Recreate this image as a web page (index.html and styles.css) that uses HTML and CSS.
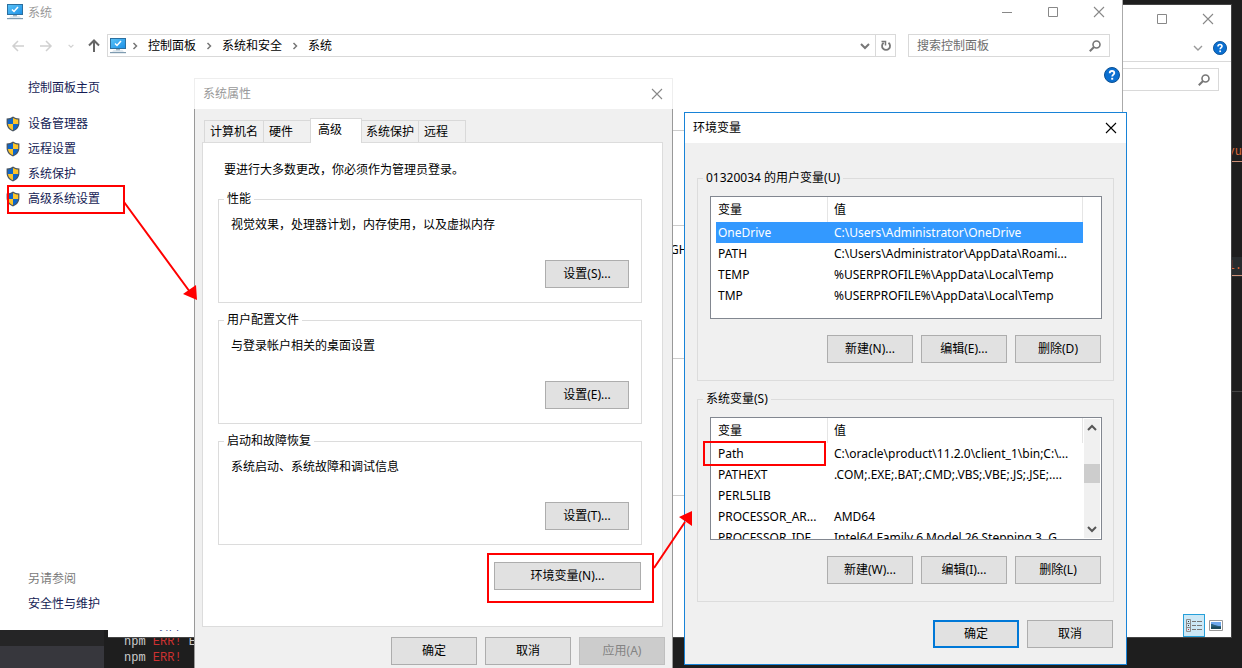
FILE: index.html
```
<!DOCTYPE html>
<html lang="zh-CN">
<head>
    <meta charset="UTF-8">
    <meta name="viewport" content="width=device-width, initial-scale=1.0">
    <title>环境变量</title>
    <link rel="stylesheet" href="styles.css">
</head>
<body>
    <!-- shared icons -->
    <svg class="defs" width="0" height="0" aria-hidden="true">
        <defs>
            <linearGradient id="screen" x1="0" y1="0" x2="1" y2="1">
                <stop offset="0" stop-color="#5cc4f8"/>
                <stop offset="1" stop-color="#1a8fe6"/>
            </linearGradient>
            <symbol id="monitor" viewBox="0 0 16 16">
                <rect x="0.5" y="0.5" width="15" height="10" fill="url(#screen)" stroke="#2b6f9f"/>
                <path d="M5 5.500l2 2 4-4.500" fill="none" stroke="#fff" stroke-width="1.500"/>
                <path d="M6 11h4v1.500H6z" fill="#9db4c4"/>
                <path d="M3.500 12.500h9l1.500 1H2z" fill="#c4d4df"/>
                <path d="M0 14h16v1.200H0z" fill="#7f9bb0"/>
            </symbol>
            <symbol id="shield" viewBox="0 0 14 16">
                <path d="M7 .5C5.300 1.800 3.200 2.400.6 2.400V7c0 4 2.400 6.900 6.400 8.500 4-1.600 6.400-4.500 6.400-8.500V2.400C10.800 2.400 8.700 1.800 7 .5z" fill="#4a5560"/>
                <path d="M7 1.900C5.600 2.800 3.900 3.400 1.800 3.500V8H7z" fill="#0f66c8"/>
                <path d="M7 1.900c1.400.9 3.100 1.500 5.200 1.600V8H7z" fill="#fcc429"/>
                <path d="M1.900 8H7v6.200C4.100 13 2.200 10.900 1.900 8z" fill="#fcc429"/>
                <path d="M12.100 8H7v6.200c2.900-1.200 4.800-3.300 5.100-6.200z" fill="#0f66c8"/>
            </symbol>
            <symbol id="close" viewBox="0 0 12 12">
                <path d="M1 1l10 10M11 1L1 11" fill="none" stroke="currentColor" stroke-width="1.100"/>
            </symbol>
            <symbol id="maximize" viewBox="0 0 12 12">
                <path d="M1.500 1.500h9v9h-9z" fill="none" stroke="currentColor"/>
            </symbol>
            <symbol id="minimize" viewBox="0 0 12 12">
                <path d="M1 6.500h10" fill="none" stroke="currentColor"/>
            </symbol>
            <symbol id="chevron-down" viewBox="0 0 10 10">
                <path d="M1 3l4 4 4-4" fill="none" stroke="currentColor" stroke-width="2"/>
            </symbol>
            <symbol id="chevron-thin" viewBox="0 0 10 10">
                <path d="M1 3l4 4 4-4" fill="none" stroke="currentColor" stroke-width="1.400"/>
            </symbol>
            <symbol id="chevron-up" viewBox="0 0 10 10">
                <path d="M1 7l4-4 4 4" fill="none" stroke="currentColor" stroke-width="2"/>
            </symbol>
            <symbol id="chevron-right" viewBox="0 0 6 8">
                <path d="M1.500 1l3 3-3 3" fill="none" stroke="currentColor" stroke-width="1.500"/>
            </symbol>
            <symbol id="search" viewBox="0 0 12 12">
                <circle cx="7.500" cy="4.500" r="3.500" fill="none" stroke="currentColor" stroke-width="1.600"/>
                <path d="M5 7L.8 11.200" fill="none" stroke="currentColor" stroke-width="2"/>
            </symbol>
            <symbol id="help" viewBox="0 0 16 16">
                <circle cx="8" cy="8" r="7.500" fill="#0a6fd0" stroke="#0a4f92"/>
                <path d="M5.700 6.200C5.700 4.700 6.700 4 8 4s2.300.7 2.300 2c0 1.600-2.100 1.700-2.100 3.500" fill="none" stroke="#fff" stroke-width="1.800"/>
                <path d="M7.200 10.800h2v1.900h-2z" fill="#fff"/>
            </symbol>
        </defs>
    </svg>

    <!-- code editor behind everything -->
    <div class="editor">
        <div class="editor-side">
            <div class="side-row"></div>
            <div class="side-row active"></div>
        </div>
        <div class="editor-main">
            <div class="code">
                <div class="code-line"><u>yu</u></div>
                <div class="code-line current"><u>l.</u></div>
            </div>
            <div class="terminal">
                <div>npm <span class="err">ERR!</span> E</div>
                <div>npm <span class="err">ERR!</span></div>
            </div>
        </div>
    </div>

    <!-- file explorer -->
    <div class="window explorer">
        <div class="titlebar">
            <button class="win-btn" aria-label="最大化"><svg width="12" height="12"><use href="#maximize"/></svg></button>
            <button class="win-btn" aria-label="关闭"><svg width="12" height="12"><use href="#close"/></svg></button>
        </div>
        <div class="ribbon">
            <svg class="muted" width="10" height="10"><use href="#chevron-thin"/></svg>
            <svg width="14" height="14"><use href="#help"/></svg>
        </div>
        <div class="explorer-search">
            <div class="search-box">
                <input type="text" aria-label="搜索">
                <svg width="12" height="12"><use href="#search"/></svg>
            </div>
        </div>
        <div class="statusbar">
            <span>个项目</span>
            <div class="views">
                <button class="view-btn selected" aria-label="详细信息">
                    <svg width="16" height="14" viewBox="0 0 16 14" fill="none">
                        <path d="M.5.500h4v12h-4zM.5 4.500h4M.5 8.500h4" stroke="#8c8c8c"/>
                        <path d="M2 2.500h1M2 6.500h1" stroke="#333"/>
                        <path d="M2 10.500h1" stroke="#c33"/>
                        <path d="M6 2.500h4m1 0h5M6 6.500h4m1 0h5M6 10.500h4m1 0h5" stroke="#777"/>
                    </svg>
                </button>
                <button class="view-btn" aria-label="大图标">
                    <svg width="14" height="11" viewBox="0 0 14 11">
                        <path d="M.5.500h13v10H.5z" fill="#fff" stroke="#999"/>
                        <path d="M2 2h10v4H2z" fill="#6fa8ec"/>
                        <path d="M2 4c3 0 4 2 10 2v3H2z" fill="#2d6480"/>
                        <path d="M2 7c4-1 7 0 10 0v2H2z" fill="#1d4a5c"/>
                    </svg>
                </button>
            </div>
        </div>
    </div>

    <!-- control panel: system -->
    <div class="window system">
        <div class="titlebar">
            <svg class="title-icon" width="16" height="16"><use href="#monitor"/></svg>
            <span class="title">系统</span>
            <button class="win-btn" aria-label="最小化"><svg width="12" height="12"><use href="#minimize"/></svg></button>
            <button class="win-btn" aria-label="最大化"><svg width="12" height="12"><use href="#maximize"/></svg></button>
            <button class="win-btn" aria-label="关闭"><svg width="12" height="12"><use href="#close"/></svg></button>
        </div>
        <div class="navbar">
            <div class="history">
                <button class="faded" aria-label="后退"><svg width="14" height="12" viewBox="0 0 14 12"><path d="M7 1L2 6l5 5M2 6h11" fill="none" stroke="currentColor" stroke-width="1.500"/></svg></button>
                <button class="faded" aria-label="前进"><svg width="14" height="12" viewBox="0 0 14 12"><path d="M7 1l5 5-5 5M12 6H1" fill="none" stroke="currentColor" stroke-width="1.500"/></svg></button>
                <button class="faded" aria-label="最近"><svg width="6" height="6"><use href="#chevron-down"/></svg></button>
                <button aria-label="向上"><svg width="12" height="13" viewBox="0 0 12 13"><path d="M1 6.500l5-5 5 5M6 1.500V13" fill="none" stroke="currentColor" stroke-width="2"/></svg></button>
            </div>
            <div class="address">
                <svg width="16" height="16"><use href="#monitor"/></svg>
                <nav class="crumbs">
                    <svg width="6" height="8"><use href="#chevron-right"/></svg>
                    <a href="#">控制面板</a>
                    <svg width="6" height="8"><use href="#chevron-right"/></svg>
                    <a href="#">系统和安全</a>
                    <svg width="6" height="8"><use href="#chevron-right"/></svg>
                    <a href="#">系统</a>
                </nav>
                <button class="drop" aria-label="历史记录"><svg width="10" height="10"><use href="#chevron-down"/></svg></button>
                <button class="refresh" aria-label="刷新"><svg width="12" height="12" viewBox="0 0 12 12"><path d="M8.500 2.800A4 4 0 1 1 3.600 2.800" fill="none" stroke="currentColor" stroke-width="1.800"/><path d="M1.500 1.500h4V5.500" fill="none" stroke="currentColor" stroke-width="1.500"/></svg></button>
            </div>
            <div class="search-box">
                <input type="text" placeholder="搜索控制面板" aria-label="搜索控制面板">
                <svg width="12" height="12"><use href="#search"/></svg>
            </div>
        </div>
        <div class="system-body">
            <div class="sidebar">
                <a class="home" href="#">控制面板主页</a>
                <ul>
                    <li><a href="#"><svg width="14" height="16"><use href="#shield"/></svg>设备管理器</a></li>
                    <li><a href="#"><svg width="14" height="16"><use href="#shield"/></svg>远程设置</a></li>
                    <li><a href="#"><svg width="14" height="16"><use href="#shield"/></svg>系统保护</a></li>
                    <li><a href="#"><svg width="14" height="16"><use href="#shield"/></svg>高级系统设置</a></li>
                </ul>
                <div class="see-also">
                    <span>另请参阅</span>
                    <a href="#">安全性与维护</a>
                </div>
            </div>
            <div class="system-main">
                <button class="help-btn" aria-label="帮助"><svg width="16" height="16"><use href="#help"/></svg></button>
                <div class="info edition"></div>
                <div class="info hardware">GHz</div>
                <div class="info"></div>
                <div class="info"></div>
            </div>
        </div>
    </div>

    <!-- system properties -->
    <div class="dialog props">
        <div class="titlebar">
            <span class="title">系统属性</span>
            <button class="win-btn" aria-label="关闭"><svg width="12" height="12"><use href="#close"/></svg></button>
        </div>
        <div class="props-body">
            <div class="tabs" role="tablist">
                <button role="tab" class="tab">计算机名</button>
                <button role="tab" class="tab wide">硬件</button>
                <button role="tab" class="tab selected" aria-selected="true">高级</button>
                <button role="tab" class="tab">系统保护</button>
                <button role="tab" class="tab wide">远程</button>
            </div>
            <div class="panel">
                <p class="note">要进行大多数更改，你必须作为管理员登录。</p>
                <fieldset>
                    <legend>性能</legend>
                    <p>视觉效果，处理器计划，内存使用，以及虚拟内存</p>
                    <button class="btn">设置(S)...</button>
                </fieldset>
                <fieldset>
                    <legend>用户配置文件</legend>
                    <p>与登录帐户相关的桌面设置</p>
                    <button class="btn">设置(E)...</button>
                </fieldset>
                <fieldset>
                    <legend>启动和故障恢复</legend>
                    <p>系统启动、系统故障和调试信息</p>
                    <button class="btn">设置(T)...</button>
                </fieldset>
                <button class="btn env-btn">环境变量(N)...</button>
            </div>
            <div class="buttons">
                <button class="btn">确定</button>
                <button class="btn">取消</button>
                <button class="btn" disabled>应用(A)</button>
            </div>
        </div>
    </div>

    <!-- environment variables -->
    <div class="dialog env">
        <div class="titlebar">
            <span class="title">环境变量</span>
            <button class="win-btn" aria-label="关闭"><svg width="12" height="12"><use href="#close"/></svg></button>
        </div>
        <div class="env-body">
            <fieldset>
                <legend>01320034 的用户变量(U)</legend>
                <div class="list">
                    <table>
                        <thead>
                            <tr><th class="name">变量</th><th>值</th></tr>
                        </thead>
                        <tbody>
                            <tr class="selected"><td>OneDrive</td><td>C:\Users\Administrator\OneDrive</td></tr>
                            <tr><td>PATH</td><td>C:\Users\Administrator\AppData\Roami...</td></tr>
                            <tr><td>TEMP</td><td>%USERPROFILE%\AppData\Local\Temp</td></tr>
                            <tr><td>TMP</td><td>%USERPROFILE%\AppData\Local\Temp</td></tr>
                        </tbody>
                    </table>
                </div>
                <div class="buttons">
                    <button class="btn">新建(N)...</button>
                    <button class="btn">编辑(E)...</button>
                    <button class="btn">删除(D)</button>
                </div>
            </fieldset>
            <fieldset>
                <legend>系统变量(S)</legend>
                <div class="list">
                    <table>
                        <thead>
                            <tr><th class="name">变量</th><th>值</th></tr>
                        </thead>
                        <tbody>
                            <tr><td>Path</td><td>C:\oracle\product\11.2.0\client_1\bin;C:\...</td></tr>
                            <tr><td>PATHEXT</td><td>.COM;.EXE;.BAT;.CMD;.VBS;.VBE;.JS;.JSE;....</td></tr>
                            <tr><td>PERL5LIB</td><td></td></tr>
                            <tr><td>PROCESSOR_AR...</td><td>AMD64</td></tr>
                            <tr><td>PROCESSOR_IDE...</td><td>Intel64 Family 6 Model 26 Stepping 3, G...</td></tr>
                        </tbody>
                    </table>
                    <div class="scrollbar">
                        <button aria-label="向上滚动"><svg width="10" height="10"><use href="#chevron-up"/></svg></button>
                        <div class="track"><div class="thumb"></div></div>
                        <button aria-label="向下滚动"><svg width="10" height="10"><use href="#chevron-down"/></svg></button>
                    </div>
                </div>
                <div class="buttons">
                    <button class="btn">新建(W)...</button>
                    <button class="btn">编辑(I)...</button>
                    <button class="btn">删除(L)</button>
                </div>
            </fieldset>
            <div class="buttons">
                <button class="btn default">确定</button>
                <button class="btn">取消</button>
            </div>
        </div>
    </div>

    <!-- red boxes and arrows -->
    <svg class="marks" width="1" height="1" aria-hidden="true">
        <g fill="none" stroke="#f00" stroke-width="2">
            <rect x="8" y="186" width="116" height="27"/>
            <rect x="488" y="554" width="165" height="48"/>
            <rect x="704" y="442" width="121" height="23"/>
            <path d="M124 202l66 90M654 568l31-46"/>
        </g>
        <path d="M197 300l-14-6 13-9z M692 511l-13 6 13 9z" fill="#f00"/>
    </svg>
</body>
</html>
```
FILE: styles.css
```
* {
    box-sizing: border-box;
}

body {
    margin: 0;
    min-height: 100vh;
    position: relative;
    overflow: hidden;
    background-color: #1e1e1e;
    color: #000;
    font-family: "Noto Sans", "Noto Sans CJK SC", sans-serif;
    font-size: 12px;
    line-height: 16px;
}

button,
input {
    font: inherit;
    color: inherit;
    padding: 0;
    border: none;
    background: none;
}

p,
ul {
    margin: 0;
    padding: 0;
    list-style: none;
}

a {
    color: inherit;
    text-decoration: none;
}

svg {
    display: block;
    flex-shrink: 0;
}

.defs {
    position: absolute;
}

/* editor */
.editor {
    position: absolute;
    inset: 0;
    display: flex;
    font-family: "Liberation Mono", monospace;
    color: #ccc;
}

.editor-side {
    width: 104px;
    display: flex;
    flex-direction: column;
    justify-content: flex-end;
    background-color: #252526;
}

.side-row {
    height: 22px;
}

.side-row.active {
    background-color: #37373d;
}

.editor-main {
    flex: 1;
    display: flex;
    flex-direction: column;
}

.code {
    height: 392px;
    padding-top: 143px;
    border-bottom: 1px solid #444;
    text-align: right;
    color: #d8693c;
}

.code-line {
    height: 20px;
    line-height: 18px;
    margin-bottom: 94px;
}

.code-line u {
    display: inline-block;
    text-decoration: none;
    border-bottom: 1px solid #ce9178;
}

.code-line.current {
    background-color: #282c2e;
}

.terminal {
    flex: 1;
    display: flex;
    flex-direction: column;
    justify-content: flex-end;
    padding: 0 20px 2px;
}

.err {
    color: #cd3131;
}

/* windows */
.window,
.dialog {
    position: absolute;
    display: flex;
    flex-direction: column;
    background-color: #fff;
}

.titlebar {
    display: flex;
    align-items: center;
    color: #999;
}

.title {
    flex: 1;
}

.win-btn {
    width: 46px;
    height: 24px;
    display: flex;
    align-items: center;
    justify-content: center;
    color: #888;
}

.search-box {
    width: 202px;
    height: 23px;
    display: flex;
    align-items: center;
    padding: 0 8px;
    border: 1px solid #d9d9d9;
    color: #777;
}

.search-box input {
    flex: 1;
    min-width: 0;
    outline: none;
}

.search-box input::placeholder {
    color: #6d6d6d;
    opacity: 1;
}

/* explorer */
.explorer {
    top: 4px;
    right: 10px;
    bottom: 30px;
    left: 108px;
    border: 1px solid #444;
    border-left: none;
}

.explorer .titlebar {
    justify-content: flex-end;
    padding-top: 2px;
}

.ribbon {
    display: flex;
    justify-content: flex-end;
    align-items: center;
    gap: 10px;
    height: 31px;
    padding: 3px 4px 0;
    border-bottom: 1px solid #d9d9d9;
    color: #999;
}

.explorer-search {
    flex: 1;
    display: flex;
    justify-content: flex-end;
    padding: 6px 12px;
}

.statusbar {
    display: flex;
    justify-content: space-between;
    align-items: center;
    padding: 0 4px 0 36px;
    color: #1e3287;
}

.views {
    display: flex;
}

.view-btn {
    width: 22px;
    height: 23px;
    display: flex;
    align-items: center;
    justify-content: center;
}

.view-btn.selected {
    background-color: #cce8f6;
    border: 1px solid #26a0da;
}

/* system */
.system {
    top: 0;
    right: 119px;
    bottom: 38px;
    left: 0;
    border-right: 1px solid #aaa;
}

.title-icon {
    margin: 0 5px 0 7px;
}

.system .title {
    padding-top: 2px;
}

.navbar {
    display: flex;
    align-items: center;
    gap: 12px;
    padding: 10px 12px 0 11px;
}

.history {
    width: 96px;
    margin-right: -12px;
    padding-right: 7px;
    display: flex;
    align-items: center;
    justify-content: space-between;
    color: #666;
}

.faded {
    color: #d0d0d0;
}

.address {
    flex: 1;
    height: 23px;
    display: flex;
    align-items: center;
    padding-left: 2px;
    border: 1px solid #d9d9d9;
}

.address svg {
    color: #777;
}

.crumbs {
    flex: 1;
    display: flex;
    align-items: center;
    gap: 10px;
    padding-left: 6px;
}

.drop,
.refresh {
    width: 20px;
    height: 21px;
    display: flex;
    align-items: center;
    justify-content: center;
}

.refresh {
    border-left: 1px solid #d9d9d9;
}

.system-body {
    flex: 1;
    display: flex;
}

.sidebar {
    width: 194px;
    display: flex;
    flex-direction: column;
    padding: 23px 0 20px 6px;
    color: #151c55;
}

.home {
    padding-left: 22px;
    margin-bottom: 15px;
}

.sidebar li a {
    display: flex;
    align-items: center;
    gap: 8px;
    height: 25px;
}

.see-also {
    margin-top: auto;
    padding-left: 22px;
    display: flex;
    flex-direction: column;
    gap: 9px;
}

.see-also span {
    color: #7a7a7a;
}

.system-main {
    flex: 1;
}

.help-btn {
    display: block;
    margin: 10px 2px 47px auto;
}

.info {
    height: 137px;
    border-top: 1px solid #ccc;
}

.info.edition {
    height: 95px;
}

.info.hardware {
    height: 133px;
    padding: 16px 0 0 476px;
}

/* dialogs */
.dialog .titlebar {
    height: 30px;
    padding-left: 8px;
    background-color: #fff;
}

.dialog .win-btn {
    width: 30px;
}

fieldset {
    min-width: 0;
    margin: 0;
    border: 1px solid #dcdcdc;
}

legend {
    padding: 0 3px;
}

.btn {
    width: 86px;
    height: 28px;
    background-color: #e1e1e1;
    border: 1px solid #adadad;
}

.btn:disabled {
    background-color: #ccc;
    border-color: #bfbfbf;
    color: #838383;
}

.btn.default {
    border: 2px solid #0078d7;
}

.buttons {
    display: flex;
    justify-content: flex-end;
    gap: 8px;
}

/* system properties */
.props {
    top: 78px;
    left: 194px;
    width: 479px;
    border-top: 1px solid #eee;
}

.props .titlebar {
    border-left: 1px solid #eee;
    border-right: 1px solid #eee;
}

.props-body {
    padding: 9px 7px 10px;
    background-color: #f0f0f0;
    border-left: 1px solid #999;
    border-right: 1px solid #999;
}

.tabs {
    display: flex;
    align-items: flex-end;
    padding-left: 2px;
}

.tab {
    height: 22px;
    padding: 1px 5px 0;
    background-color: #f0f0f0;
    border: 1px solid #d9d9d9;
    border-right: none;
    border-bottom: none;
}

.tab.wide {
    padding-right: 17px;
}

.tab:last-child {
    border-right: 1px solid #d9d9d9;
}

.tab.selected {
    height: 25px;
    margin: 0 0 -1px;
    padding: 0 19px 2px 7px;
    background-color: #fff;
    border-right: 1px solid #d9d9d9;
    position: relative;
}

.tab.selected + .tab {
    padding: 1px 4px 0;
    border-left: none;
}

.panel {
    display: flex;
    flex-direction: column;
    margin-right: 2px;
    padding: 19px 20px 36px 15px;
    background-color: #fff;
    border: 1px solid #dcdcdc;
}

.note {
    padding-left: 6px;
    margin-bottom: 13px;
}

.panel fieldset {
    display: flex;
    flex-direction: column;
    gap: 27px;
    margin-bottom: 9px;
    padding: 10px 12px 14px;
}

.panel legend {
    margin-left: -7px;
}

.panel fieldset .btn {
    width: 84px;
    align-self: flex-end;
}

.panel .env-btn {
    width: 147px;
    margin-top: 8px;
    margin-right: 1px;
    align-self: flex-end;
}

.props-body > .buttons {
    margin-top: 10px;
}

/* environment variables */
.env {
    top: 112px;
    left: 684px;
    width: 443px;
    border: 1px solid #1883d7;
}

.env .titlebar,
.env .win-btn {
    color: #000;
}

.env-body {
    padding: 27px 12px 16px;
    background-color: #f0f0f0;
}

.env fieldset {
    margin-bottom: 10px;
    padding: 10px 11px 17px 12px;
}

.env legend {
    margin-left: -7px;
}

.list {
    height: 123px;
    display: flex;
    justify-content: space-between;
    margin-bottom: 16px;
    padding: 0 1px 0 5px;
    overflow: hidden;
    background-color: #fff;
    border: 1px solid #828790;
}

table {
    width: 367px;
    height: max-content;
    table-layout: fixed;
    border-collapse: separate;
    border-spacing: 0;
}

th,
td {
    height: 21px;
    padding: 0 0 0 6px;
    text-align: left;
    font-weight: normal;
    white-space: nowrap;
}

th {
    height: 25px;
    border-right: 1px solid #e5e5e5;
}

.name {
    width: 112px;
}

th:first-child,
td:first-child {
    padding-left: 2px;
}

tr.selected {
    background-color: #39f;
    color: #fff;
}

.scrollbar {
    width: 16px;
    display: flex;
    flex-direction: column;
    margin: 1px 0;
    background-color: #f0f0f0;
    color: #555;
}

.scrollbar button {
    height: 18px;
    display: flex;
    align-items: center;
    justify-content: center;
}

.track {
    flex: 1;
    padding-top: 27px;
}

.thumb {
    height: 19px;
    background-color: #cdcdcd;
}

.env .buttons {
    padding-right: 1px;
}

.env-body > .buttons {
    margin-top: 18px;
}

/* annotations */
.marks {
    position: absolute;
    top: 0;
    left: 0;
    overflow: visible;
}
```
